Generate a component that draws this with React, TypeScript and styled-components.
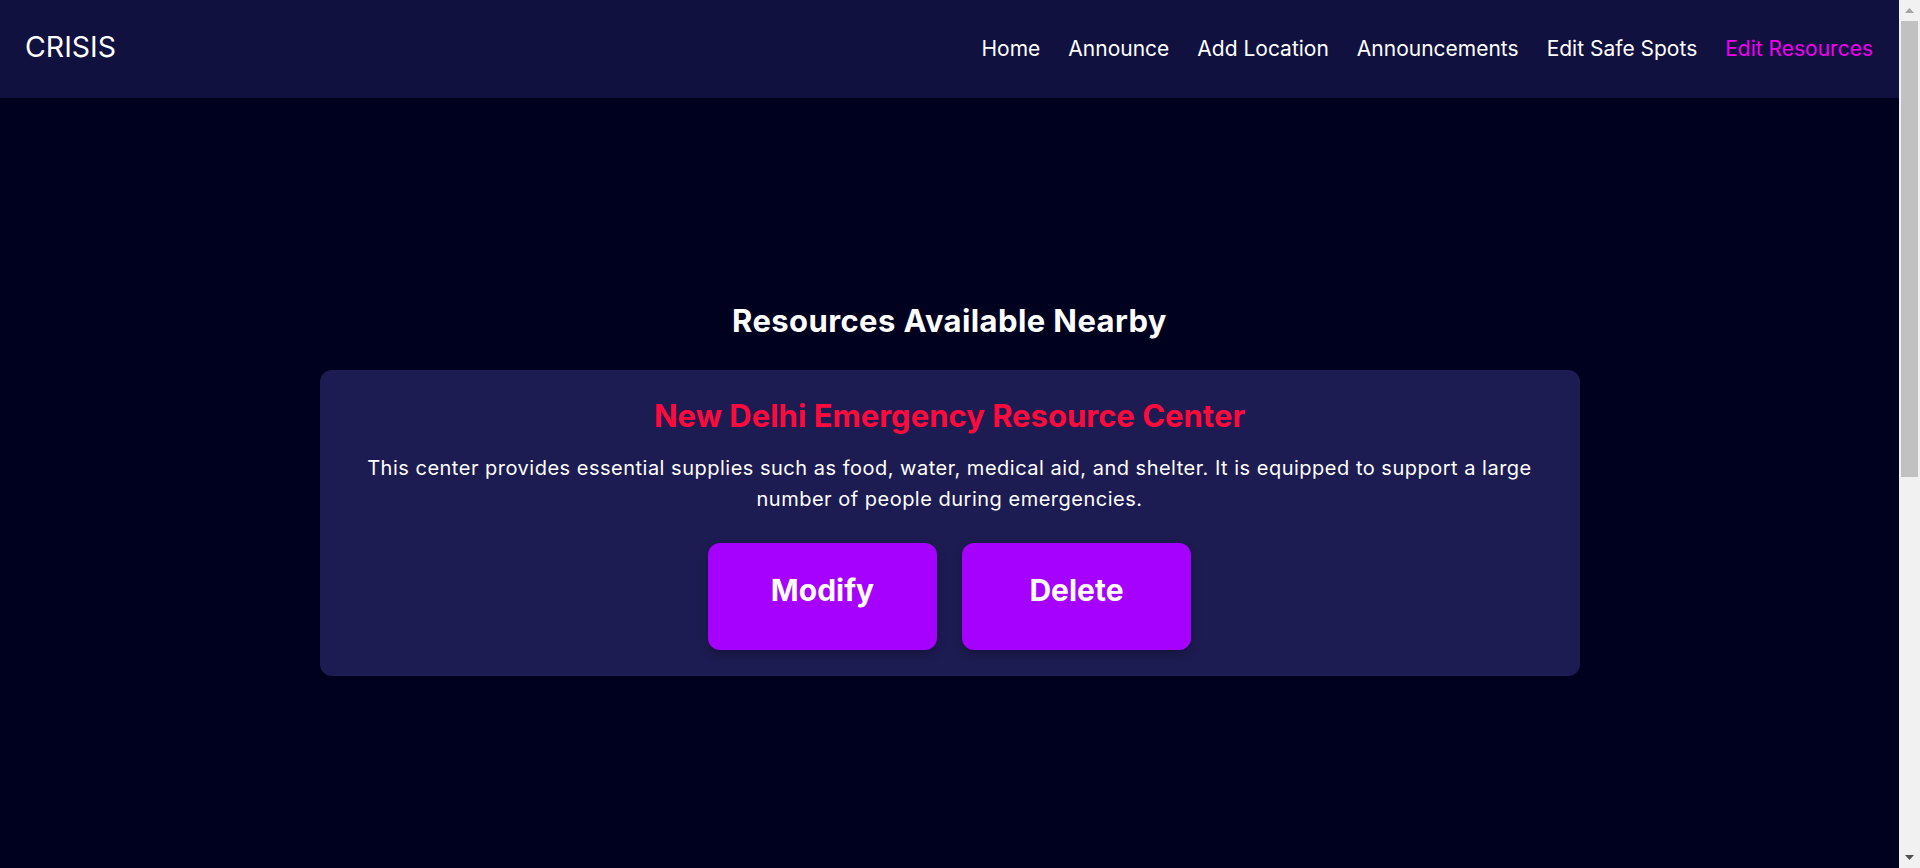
import React from "react";
import styled, { createGlobalStyle } from "styled-components";

const GlobalStyle = createGlobalStyle`
  * { box-sizing: border-box; }
  html, body { margin: 0; padding: 0; overflow: hidden; }
  body {
    background: #00001f;
    font-family: "Inter", "Noto Sans", sans-serif;
    color: #ffffff;
  }
`;

const Frame = styled.div`
  display: flex;
  height: 100vh;
  width: 100vw;
`;

const Viewport = styled.div`
  flex: 1;
  min-width: 0;
  overflow: hidden;
  display: flex;
  flex-direction: column;
  background: #00001f;
`;

const ScrollTrack = styled.div`
  width: 21px;
  flex: none;
  background: #f1f1f1;
  display: flex;
  flex-direction: column;
  align-items: center;
`;

const ScrollArrow = styled.div`
  height: 21px;
  width: 100%;
  display: flex;
  align-items: center;
  justify-content: center;
  flex: none;
`;

const ScrollThumb = styled.div`
  width: 17px;
  height: 456px;
  background: #c1c1c1;
  flex: none;
`;

const ScrollSpacer = styled.div`
  flex: 1;
`;

const NavBar = styled.nav`
  height: 98px;
  flex: none;
  background: #11113f;
  display: flex;
  align-items: center;
  justify-content: space-between;
  padding: 0 26px 2px 25px;
`;

const Brand = styled.div`
  font-size: 28.5px;
  font-weight: 400;
  color: #ffffff;
  margin-bottom: 3px;
`;

const NavLinks = styled.ul`
  list-style: none;
  margin: 0;
  padding: 0;
  display: flex;
  gap: 28px;
`;

const NavLink = styled.li<{ $active?: boolean }>`
  font-size: 21px;
  font-weight: 400;
  color: ${(p) => (p.$active ? "#f000f0" : "#ffffff")};
  cursor: pointer;
`;

const Main = styled.main`
  display: flex;
  flex-direction: column;
  align-items: center;
  padding-top: 203px;
`;

const Title = styled.h2`
  margin: 0 0 29px;
  font-size: 31px;
  line-height: 40px;
  letter-spacing: 0.4px;
  font-weight: 700;
  color: #ffffff;
`;

const Card = styled.section`
  width: 1260px;
  background: #1d1c52;
  border-radius: 12px;
  padding: 26px 30px 26px;
  display: flex;
  flex-direction: column;
  align-items: center;
  text-align: center;
`;

const CardTitle = styled.h3`
  margin: 0 0 17px;
  font-size: 31px;
  line-height: 40px;
  font-weight: 700;
  color: #ff0a3c;
`;

const CardText = styled.p`
  margin: 0 0 28px;
  font-size: 20px;
  line-height: 31px;
  letter-spacing: 0.5px;
  font-weight: 400;
  color: #ffffff;
`;

const Actions = styled.div`
  display: flex;
  gap: 25px;
`;

const ActionButton = styled.button`
  width: 229px;
  height: 107px;
  border: none;
  border-radius: 12px;
  background: #a600ff;
  color: #ffffff;
  font-family: inherit;
  font-size: 30px;
  font-weight: 700;
  padding: 0 0 14px;
  box-shadow: 0 4px 10px rgba(0, 0, 0, 0.28);
  cursor: pointer;
`;

const links = [
  "Home",
  "Announce",
  "Add Location",
  "Announcements",
  "Edit Safe Spots",
  "Edit Resources",
];

export default function App() {
  return (
    <>
      <GlobalStyle />
      <Frame>
        <Viewport>
          <NavBar>
            <Brand>CRISIS</Brand>
            <NavLinks>
              {links.map((l) => (
                <NavLink key={l} $active={l === "Edit Resources"}>
                  {l}
                </NavLink>
              ))}
            </NavLinks>
          </NavBar>
          <Main>
            <Title>Resources Available Nearby</Title>
            <Card>
              <CardTitle>New Delhi Emergency Resource Center</CardTitle>
              <CardText>
                This center provides essential supplies such as food, water,
                medical aid, and shelter. It is equipped to support a large
                number of people during emergencies.
              </CardText>
              <Actions>
                <ActionButton>Modify</ActionButton>
                <ActionButton>Delete</ActionButton>
              </Actions>
            </Card>
          </Main>
        </Viewport>
        <ScrollTrack>
          <ScrollArrow>
            <svg width="9" height="5" viewBox="0 0 9 5">
              <path d="M4.5 0 L9 5 L0 5 Z" fill="#a3a3a3" />
            </svg>
          </ScrollArrow>
          <ScrollThumb />
          <ScrollSpacer />
          <ScrollArrow>
            <svg width="9" height="5" viewBox="0 0 9 5">
              <path d="M0 0 L9 0 L4.5 5 Z" fill="#505050" />
            </svg>
          </ScrollArrow>
        </ScrollTrack>
      </Frame>
    </>
  );
}
